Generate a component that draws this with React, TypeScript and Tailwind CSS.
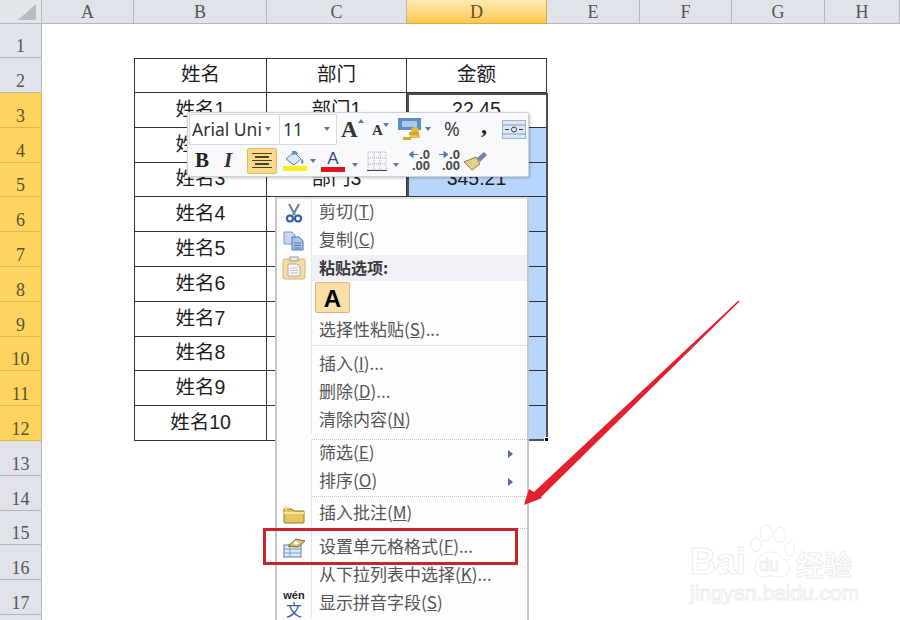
import React from "react";

const cols = ["A", "B", "C", "D", "E", "F", "G", "H"];
const rows = Array.from({ length: 18 }, (_, i) => i + 1);
const cjk = "font-['Noto_Sans_CJK_SC',sans-serif]";

function cellValue(col: string, row: number) {
  if (row < 2 || row > 12) return "";
  if (row === 2) return col === "B" ? "姓名" : col === "C" ? "部门" : col === "D" ? "金额" : "";
  if (col === "B") return `姓名${row - 2}`;
  // the rest of C and D sit under the menu
  if (col === "C") return row === 3 || row === 5 ? `部门${row - 2}` : "";
  if (col === "D") return row === 3 ? "22.45" : row === 5 ? "345.21" : "";
  return "";
}

function Cell({ col, row }: { col: string; row: number }) {
  const inTable = row >= 2 && row <= 12 && (col === "B" || col === "C" || col === "D");
  if (!inTable) return <div className="bg-white" />;
  return (
    <div
      className={`flex items-center justify-center pb-[1px] font-['Liberation_Sans','Noto_Sans_CJK_SC',sans-serif] text-[19.5px] leading-none text-[#1c1c1c] border-b border-r border-[#333] ${row === 2 ? "border-t" : ""} ${col === "B" ? "border-l" : ""} ${col === "D" && row > 3 ? "bg-[#b7d6fb]" : "bg-white"}`}
    >
      {cellValue(col, row)}
    </div>
  );
}

function Caret() {
  return <span className="mx-[3px] inline-block border-x-[3.5px] border-t-[4px] border-x-transparent border-t-[#6d7480]" />;
}

function Scissors() {
  return (
    <svg width="18" height="20" viewBox="0 0 18 20">
      <path d="M4 1 L10 12 M14 1 L8 12" stroke="#6f7f96" strokeWidth="2" fill="none" />
      <circle cx="5" cy="15.5" r="3" fill="none" stroke="#2f56a8" strokeWidth="2" />
      <circle cx="13" cy="15.5" r="3" fill="none" stroke="#2f56a8" strokeWidth="2" />
    </svg>
  );
}

function CopyIcon() {
  return (
    <svg width="22" height="20" viewBox="0 0 22 20">
      <path d="M1 1h8l3 3v9H1z" fill="#c9d8ee" stroke="#7f97bb" />
      <path d="M9 6h7l4 4v9H9z" fill="#a9c6ea" stroke="#4d74ab" />
      <path d="M11 12h7M11 14.500h7M11 17h7" stroke="#4d74ab" />
    </svg>
  );
}

function PasteIcon() {
  return (
    <svg width="24" height="24" viewBox="0 0 24 24">
      <rect x="1" y="3" width="22" height="20" rx="2" fill="#f8dca6" stroke="#d5b06f" />
      <rect x="8" y="1" width="8" height="4" fill="#e9e9e9" stroke="#a59a85" />
      <path d="M6 8h9l3 3v9H6z" fill="#fbfbfb" stroke="#a8a8a8" />
      <path d="M8 12h8M8 14.500h8M8 17h8" stroke="#bdbdbd" />
    </svg>
  );
}

function FolderIcon() {
  return (
    <svg width="24" height="20" viewBox="0 0 24 20">
      <path d="M2 5h8l2 2h10v11a1 1 0 0 1-1 1H3a1 1 0 0 1-1-1z" fill="#e5c75a" stroke="#8f7a2e" />
      <path d="M2 9h20" stroke="#f5e69a" strokeWidth="2" />
      <path d="M4 0l1 3 3 1-3 1-1 3-1-3-3-1 3-1z" fill="#f2e37a" />
    </svg>
  );
}

function FormatIcon() {
  return (
    <svg width="24" height="20" viewBox="0 0 24 20">
      <rect x="2" y="7" width="17" height="12" fill="#dfe9f6" stroke="#5b7ea8" />
      <path d="M2 11h17M2 15h17M8 7v12" stroke="#7b9cc4" />
      <path d="M6 8 L14 1 L23 3 L16 9z" fill="#e0c46a" stroke="#6f6640" />
      <path d="M11 5l3-2 3 2-3 2z" fill="#fff" />
    </svg>
  );
}

function WenIcon() {
  return (
    <div className="flex h-[27px] w-[26px] flex-col items-center">
      <span className="font-['Liberation_Sans',sans-serif] text-[11px] font-bold leading-[9px] text-[#222]">wén</span>
      <span className={`${cjk} text-[16px] leading-[18px] text-[#3b5fa5]`}>文</span>
    </div>
  );
}

function SubArrow() {
  return <span className="ml-auto mr-[14px] mt-[3px] inline-block border-y-[4.500px] border-l-[5px] border-y-transparent border-l-[#56689c]" />;
}

type ItemProps = { label: string; hotkey: string; tail?: string; icon?: React.ReactNode; arrow?: boolean };

function Item({ label, hotkey, tail = "", icon, arrow }: ItemProps) {
  return (
    <div className="flex h-[28px] items-center">
      <div className="flex h-full w-[35px] shrink-0 items-center justify-center border-r border-[#e4e5e7]">{icon}</div>
      <div className={`flex flex-1 items-center pb-[4px] pl-[7px] text-[17px] leading-[24px] text-[#555] ${cjk}`}>
        <span>
          {label}(<span className="underline">{hotkey}</span>){tail}
        </span>
        {arrow && <SubArrow />}
      </div>
    </div>
  );
}

function Sep({ className }: { className: string }) {
  return (
    <div className={`flex ${className}`}>
      <div className="w-[35px] shrink-0 border-r border-[#e4e5e7]" />
      <div className="flex-1 border-t border-dotted border-[#c4c4c4]" />
    </div>
  );
}

function DecimalIcon({ flip }: { flip?: boolean }) {
  return (
    <div className="flex h-[24px] w-[22px] flex-col items-end font-['Liberation_Sans',sans-serif] text-[13px] font-bold leading-[11px] text-[#444]">
      <span className="flex items-center gap-[1px]">
        <svg width="9" height="7" viewBox="0 0 9 7">
          <path d={flip ? "M0 3.500h5M5 0.500l4 3-4 3z" : "M9 3.500H4M4 0.500l-4 3 4 3z"} fill="#4f7fb8" stroke="#4f7fb8" />
        </svg>
        .0
      </span>
      <span>.00</span>
    </div>
  );
}

function MiniToolbar() {
  return (
    <div className="absolute left-[187px] top-[112px] flex h-[65px] w-[342px] flex-col rounded-[2px] border border-[#cfd2d6] bg-[#f8f9fa] shadow-[1px_1px_3px_rgba(0,0,0,0.25)]">
      <div className="flex h-[32px] items-center">
        <div className="ml-[1px] flex h-[31px] w-[91px] items-center whitespace-nowrap border border-[#d6d9de] bg-white pl-[2px] font-['Noto_Sans',sans-serif] text-[17.5px] text-[#333]">
          Arial Uni
          <Caret />
        </div>
        <div className="flex h-[31px] w-[57px] items-center justify-between border border-l-0 border-[#d6d9de] bg-white pl-[3px] pr-[3px] font-['Noto_Sans',sans-serif] text-[17.5px] text-[#333]">
          11
          <Caret />
        </div>
        <div className="ml-[4px] flex w-[30px] items-start font-['Liberation_Serif',serif] text-[23px] font-bold leading-none text-[#333]">
          A<span className="mt-[1px] inline-block border-x-[3px] border-b-[4px] border-x-transparent border-b-[#4f7fb8]" />
        </div>
        <div className="ml-[1px] mt-[3px] flex w-[26px] items-start font-['Liberation_Serif',serif] text-[15px] font-bold leading-none text-[#333]">
          A<span className="inline-block border-x-[3px] border-t-[4px] border-x-transparent border-t-[#4f7fb8]" />
        </div>
        <svg width="24" height="24" viewBox="0 0 24 24">
          <rect x="0" y="1" width="23" height="12" fill="#5c8ec6" />
          <path d="M4 4h15v6H4z" fill="#a9c8ea" />
          <circle cx="17" cy="14" r="4" fill="#e6b93a" />
          <rect x="11" y="15" width="10" height="3" fill="#d9a62a" />
          <rect x="12" y="18" width="10" height="3" fill="#e9bf45" />
          <rect x="5" y="20" width="8" height="3" fill="#d9a62a" />
        </svg>
        <Caret />
        <span className="ml-[10px] w-[37px] font-['Noto_Sans',sans-serif] text-[19px] leading-none text-[#444]">%</span>
        <span className="-mt-[8px] w-[20px] font-['Liberation_Serif',serif] text-[24px] font-bold leading-none text-[#222]">,</span>
        <svg width="24" height="19" viewBox="0 0 24 19" className="ml-[1px]">
          <rect x="0.500" y="0.500" width="23" height="18" fill="#dce8f5" stroke="#9db5d0" />
          <path d="M0 5h24M0 14h24" stroke="#7f9dbd" />
          <path d="M3 9.500h4M17 9.500h4" stroke="#333" />
          <circle cx="12" cy="9.500" r="2.500" fill="none" stroke="#333" />
        </svg>
      </div>
      <div className="flex flex-1 items-center">
        <span className="ml-[7px] w-[29px] font-['Liberation_Serif',serif] text-[21px] font-bold leading-none text-[#222]">B</span>
        <span className="w-[23px] font-['Liberation_Serif',serif] text-[21px] font-bold italic leading-none text-[#333]">I</span>
        <div className="flex h-[26px] w-[30px] flex-col items-center justify-center gap-[2px] rounded-[2px] border border-[#e5b95d] bg-[#fcd889]">
          {[20, 14, 20, 14, 20].map((w, i) => (
            <span key={i} className="block h-[1.500px] bg-[#4a4030]" style={{ width: w }} />
          ))}
        </div>
        <div className="ml-[6px] flex w-[24px] flex-col items-center">
          <svg width="22" height="16" viewBox="0 0 22 16">
            <path d="M2 9 L10 2 L17 9 L10 15z" fill="#dfe6ee" stroke="#5c7ba5" />
            <path d="M8 1 L12 1 L14 4 L8 5z" fill="#5c8ec6" />
            <path d="M18 9q3 3 0 5q-2-2 0-5" fill="#5c8ec6" />
          </svg>
          <span className="h-[5px] w-[24px] bg-[#f7f01e]" />
        </div>
        <Caret />
        <div className="ml-[2px] flex w-[24px] flex-col items-center">
          <span className="font-['Liberation_Sans',sans-serif] text-[17px] leading-[17px] text-[#2f4a80]">A</span>
          <span className="h-[5px] w-[24px] bg-[#e0141c]" />
        </div>
        <span className="ml-[4px]"><Caret /></span>
        <svg width="20" height="20" viewBox="0 0 20 20" className="ml-[6px]">
          <path d="M1 1h18v18H1zM1 7h18M1 13h18M7 1v18M13 1v18" fill="none" stroke="#aab0b8" strokeDasharray="1 1" />
          <path d="M0 19.500h20" stroke="#444" />
        </svg>
        <span className="ml-[3px]"><Caret /></span>
        <div className="ml-[6px]"><DecimalIcon /></div>
        <div className="ml-[8px]"><DecimalIcon flip /></div>
        <svg width="24" height="20" viewBox="0 0 24 20" className="ml-[4px]">
          <path d="M0 11 L12 6 L16 13 L8 19z" fill="#e3cf8a" stroke="#8f7d45" />
          <path d="M13 7 L20 1 L23 4 L16 11z" fill="#7a7fb0" />
        </svg>
      </div>
    </div>
  );
}

function ContextMenu() {
  return (
    <div className="absolute left-[275px] top-[197px] h-[430px] w-[254px] border-2 border-[#c3c6cb] border-t-[#e0e2e5] bg-[#fdfdfd]">
      <Item label="剪切" hotkey="T" icon={<Scissors />} />
      <Item label="复制" hotkey="C" icon={<CopyIcon />} />
      <div className="flex h-[26px] items-center">
        <div className="flex h-full w-[35px] shrink-0 items-center justify-center border-r border-[#e4e5e7]">
          <PasteIcon />
        </div>
        <div className={`flex h-full flex-1 items-center bg-[#eff1f4] pb-[3px] pl-[7px] text-[16px] font-bold text-[#3a3a3a] ${cjk}`}>粘贴选项:</div>
      </div>
      <div className="flex h-[36px]">
        <div className="w-[35px] shrink-0 border-r border-[#e4e5e7]" />
        <div className="ml-[3px] mt-[1px] flex h-[31px] w-[35px] items-center justify-center rounded-[2px] border border-[#d8b679] bg-[#fbdfa9] pt-[3px] font-['Liberation_Sans',sans-serif] text-[24px] font-bold leading-none text-black">
          A
        </div>
      </div>
      <Item label="选择性粘贴" hotkey="S" tail="..." />
      <Sep className="h-[6px]" />
      <Item label="插入" hotkey="I" tail="..." />
      <Item label="删除" hotkey="D" tail="..." />
      <Item label="清除内容" hotkey="N" />
      <Sep className="mt-[4px] h-[1px]" />
      <Item label="筛选" hotkey="E" arrow />
      <Item label="排序" hotkey="O" arrow />
      <Sep className="h-[4px]" />
      <Item label="插入批注" hotkey="M" icon={<FolderIcon />} />
      <Sep className="h-[6px]" />
      <Item label="设置单元格格式" hotkey="F" tail="..." icon={<FormatIcon />} />
      <Item label="从下拉列表中选择" hotkey="K" tail="..." />
      <Item label="显示拼音字段" hotkey="S" icon={<WenIcon />} />
    </div>
  );
}

function Watermark() {
  const stroke = "text-transparent [-webkit-text-stroke:1px_#ececec]";
  return (
    <div className="absolute left-[690px] top-[522px] flex w-[165px] flex-col">
      <div className="flex h-[58px] items-end">
        <span className={`font-['Liberation_Sans',sans-serif] text-[36px] font-bold leading-[36px] ${stroke}`}>Bai</span>
        <div className="relative ml-[1px] h-[56px] w-[48px]">
          <svg width="48" height="56" viewBox="0 0 48 56" fill="none" stroke="#ececec">
            <ellipse cx="9" cy="21" rx="5" ry="7" />
            <ellipse cx="19" cy="9" rx="6" ry="8" />
            <ellipse cx="33" cy="11" rx="6" ry="8" />
            <ellipse cx="43" cy="25" rx="5" ry="7" />
            <path d="M8 44c0-10 9-16 16-16s14 6 18 14c2 8-4 12-10 11-6-1-10-2-14 0-6 1-10-3-10-9z" />
          </svg>
          <span className={`absolute left-[12px] top-[32px] font-['Liberation_Sans',sans-serif] text-[18px] leading-[18px] ${stroke}`}>du</span>
        </div>
        <span className={`${cjk} ml-[1px] text-[28px] font-bold leading-[32px] ${stroke}`}>经验</span>
      </div>
      <span className={`mt-[2px] font-['Liberation_Sans',sans-serif] text-[21px] leading-[22px] ${stroke}`}>jingyan.baidu.com</span>
    </div>
  );
}

export default function App() {
  return (
    <div className="relative h-[620px] w-[900px] overflow-hidden bg-white">
      <div className="grid grid-cols-[42px_92px_133px_140px_140px_93px_92px_93px_75px] grid-rows-[23.5px_repeat(18,34.8px)]">
        <div className="relative overflow-hidden border-b border-r border-[#b4b8be] bg-[#e3e6eb]">
          <div className="absolute bottom-[3px] right-[5px] h-0 w-0 border-b-[16px] border-l-[18px] border-b-[#b8bcc2] border-l-transparent" />
        </div>
        {cols.map((c) => (
          <div
            key={c}
            className={`flex items-center justify-center border-b border-r pt-[2px] font-['Liberation_Serif',serif] text-[18px] leading-none ${c === "D" ? "border-[#d9aa3d] bg-gradient-to-b from-[#fdebb0] to-[#fdc84a] text-[#5c5030]" : "border-[#b4b8be] bg-[#e0e4ea] text-[#555]"}`}
          >
            {c}
          </div>
        ))}
        {rows.map((r) => (
          <React.Fragment key={r}>
            <div
              className={`flex items-end justify-center border-b border-r pb-[1px] font-['Liberation_Serif',serif] text-[18px] leading-[20px] ${r === 18 ? "overflow-hidden" : ""} ${r >= 3 && r <= 12 ? "border-[#e2b64c] bg-[#fed45e] text-[#5c5030]" : "border-[#b4b8be] bg-[#e0e4ea] text-[#555]"}`}
            >
              {r < 18 ? r : ""}
            </div>
            {cols.map((c) => (
              <Cell key={c} col={c} row={r} />
            ))}
          </React.Fragment>
        ))}
      </div>

      {/* selection frame around D3:D12 */}
      <div className="absolute left-[407px] top-[93px] h-[348px] w-[141px] border-2 border-[#4f4f4f]">
        <div className="absolute -bottom-[3px] -right-[3px] h-[5px] w-[5px] border border-white bg-black" />
      </div>

      <MiniToolbar />
      <ContextMenu />

      {/* red callout box */}
      <div className="absolute left-[263px] top-[528px] h-[37px] w-[255px] border-[3px] border-[#c9242e]" />

      <svg className="absolute left-[520px] top-[295px]" width="225" height="215" viewBox="520 295 225 215">
        <polygon points="738.500,300.500 739.500,301.500 541,497 542,498 524,505 529,489 534,492" fill="#e3202c" />
      </svg>

      <Watermark />
    </div>
  );
}
